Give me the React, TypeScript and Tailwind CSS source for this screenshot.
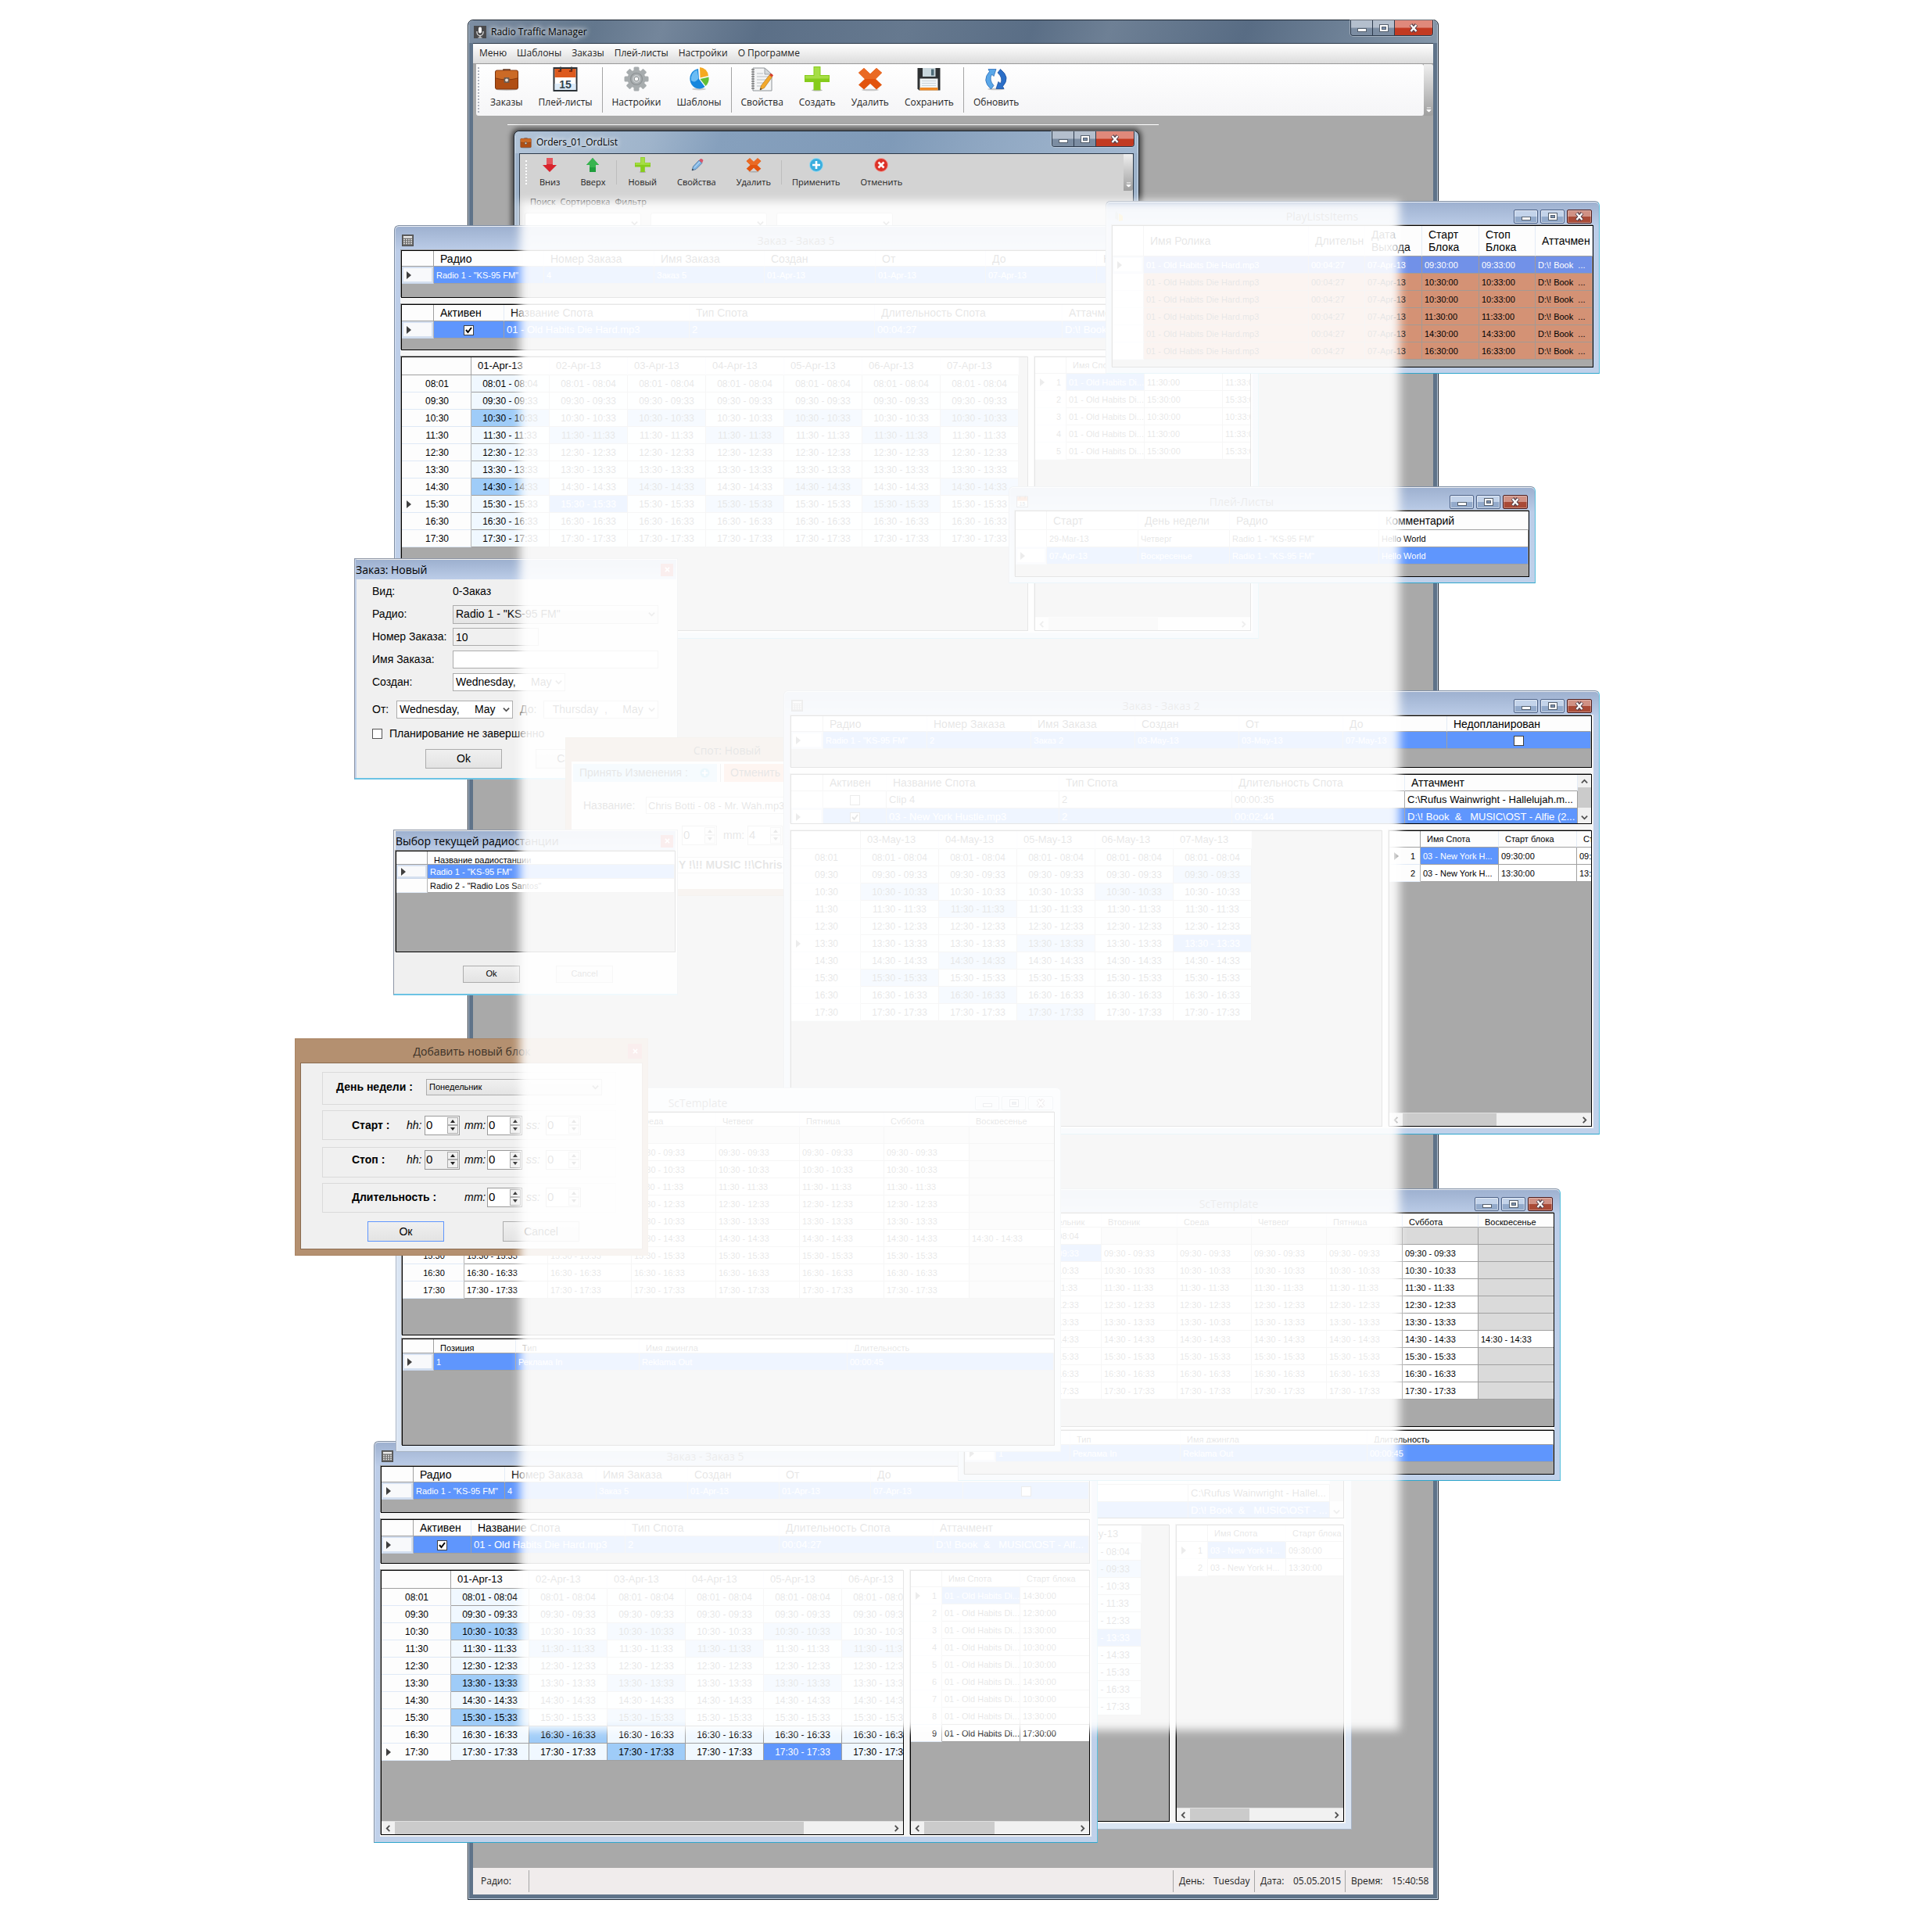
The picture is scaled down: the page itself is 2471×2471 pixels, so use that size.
import React from "react";

const ARIAL = "font-['Liberation_Sans',sans-serif]";
const SEGOE = "font-['Open_Sans','Noto_Sans',sans-serif]";
const SMALL = "text-[11px] leading-4 font-['Liberation_Sans',sans-serif]";

/* ---------- icons ---------- */

function Mic() {
  return (
    <svg viewBox="0 0 16 16" className="size-4">
      <rect width="16" height="16" fill="#4a4a4c" />
      <rect x="6" y="1.5" width="4" height="8" rx="2" fill="#fff" />
      <path d="M4 7v1.5a4 4 0 0 0 8 0V7M8 12.5V15M5.5 15h5" stroke="#e8e8e8" strokeWidth="1.2" fill="none" />
    </svg>
  );
}
function Briefcase({ className = "size-8" }: { className?: string }) {
  return (
    <svg viewBox="0 0 32 32" className={className}>
      <ellipse cx="16" cy="29.5" rx="14" ry="1.500" fill="#000" opacity=".2" />
      <path d="M12 6V4h8v2" fill="none" stroke="#5a2a10" strokeWidth="1.500" />
      <rect x="1.500" y="5" width="29" height="24" rx="2" fill="#b04e14" stroke="#7c330c" />
      <path d="M2 7.500q0-2 2-2h24q2 0 2 2V15q-14 4-28 0z" fill="#cb6a26" />
      <path d="M2 15q14 4 28 0" fill="none" stroke="#8a3c10" strokeWidth="1.300" />
      <rect x="12.500" y="14" width="7" height="7" rx="1" fill="#6b5a50" />
      <circle cx="16" cy="17.500" r="2" fill="#e8e0d8" />
    </svg>
  );
}
function Calendar({ className = "size-8" }: { className?: string }) {
  return (
    <svg viewBox="0 0 32 32" className={className}>
      <rect x="1.500" y="2" width="29" height="29" fill="#fff" stroke="#2c3238" strokeWidth="2" />
      <rect x="2.500" y="3" width="27" height="11" fill="#dd5a1e" />
      <rect x="2.500" y="22" width="27" height="8" fill="#dcebf8" />
      <path d="M10 .5v5M24 .5v5" stroke="#3a3a3a" strokeWidth="2.200" />
      <path d="M7 6h4M21 6h4" stroke="#8a2a08" strokeWidth="2" />
      <text x="16" y="27.500" textAnchor="middle" fontFamily="Liberation Sans, sans-serif" fontWeight="700" fontSize="14" fill="#33444f">15</text>
    </svg>
  );
}
function Gear() {
  return (
    <svg viewBox="0 0 32 32" className="size-8">
      <g fill="#a7acae">
        {[0, 45, 90, 135].map((a) => (
          <rect key={a} x="12.500" y="0.500" width="7" height="31" rx="1.500" transform={`rotate(${a} 16 16)`} />
        ))}
        <circle cx="16" cy="16" r="11.500" />
      </g>
      <circle cx="16" cy="16" r="7.500" fill="none" stroke="#8d9294" strokeWidth="1.200" />
      <circle cx="16" cy="16" r="5" fill="#c6cacc" />
      <circle cx="16" cy="16" r="2.800" fill="#fff" stroke="#8b9093" />
    </svg>
  );
}
function Pie() {
  return (
    <svg viewBox="0 0 32 32" className="size-8">
      <ellipse cx="16" cy="29" rx="9" ry="1.500" fill="#000" opacity=".18" />
      <path d="M15 3A12 12.800 0 1 0 23.500 26L16 16z" fill="#1787dd" />
      <path d="M13.500 4.500A11 11.500 0 0 0 6 18Q11 22 15.500 15z" fill="#6bbcf4" />
      <path d="M17 1A11.500 12 0 0 1 28 12L17.500 14.500z" fill="#f5a921" />
      <path d="M28.500 13.500A12.500 13 0 0 1 24.500 25L17.500 16z" fill="#63bf35" />
    </svg>
  );
}
function Notebook() {
  return (
    <svg viewBox="0 0 32 32" className="size-8">
      <path d="M4 2h15l9 8v21H4z" fill="#f4f5f6" stroke="#8f9498" strokeWidth="1" />
      <path d="M19 2v8h9z" fill="#d5d9dc" stroke="#8f9498" strokeWidth=".8" />
      <path d="M9 9h8M9 13h15M9 17h15M9 21h12M9 25h10" stroke="#b9bec2" strokeWidth="1" />
      <path d="M2 4h4M2 7h4M2 10h4M2 13h4M2 16h4M2 19h4M2 22h4M2 25h4M2 28h4" stroke="#555" strokeWidth="1.100" />
      <path d="M13 30l1.500-5.500L25 11l3.500 2.500L18.500 27.500z" fill="#f3a92c" stroke="#a86b12" strokeWidth=".6" />
      <path d="M25 11l1.500-2q2.500 0 3.500 2.500l-1.500 2z" fill="#d8402c" />
      <path d="M13 30l.8-2.500 1.700 1.400z" fill="#333" />
    </svg>
  );
}
function Plus({ className = "size-8" }: { className?: string }) {
  return (
    <svg viewBox="0 0 32 32" className={className}>
      <ellipse cx="16" cy="30.300" rx="7" ry="1.300" fill="#000" opacity=".25" />
      <path d="M11.500 0h9v11H32v9H20.500v10.500h-9V20H0v-9h11.500z" fill="#86cc1c" />
      <path d="M12.500 1h7v11H31v3.500H1V12h11.500z" fill="#a6de45" />
    </svg>
  );
}
function Cross({ className = "size-8" }: { className?: string }) {
  return (
    <svg viewBox="0 0 32 32" className={className}>
      <ellipse cx="16" cy="30" rx="11" ry="1.300" fill="#000" opacity=".2" />
      <path d="M8 2l8 7.500L24 2l7 6-8 8 8 7.500-7 6-8-7.500-8 7.500-7-6L9 16 1 8z" fill="#e2540e" />
      <path d="M8 2l8 7.500L24 2l7 6-8 8H9L1 8z" fill="#ea6a24" />
    </svg>
  );
}
function Floppy() {
  return (
    <svg viewBox="0 0 32 32" className="size-8">
      <path d="M1.500 2h29v28.500h-27l-2-2z" fill="#2e3133" />
      <rect x="8" y="2" width="16.500" height="11" fill="#c8d6dc" />
      <rect x="19" y="3.500" width="3.500" height="8" fill="#4e6a76" />
      <rect x="4.500" y="15.500" width="23" height="15" fill="#f1f5f7" />
      <path d="M7 18.500h18M7 21.500h18M7 24.500h18" stroke="#cbd5da" />
      <rect x="4.500" y="27" width="23" height="3.500" fill="#f08a24" />
    </svg>
  );
}
function Refresh() {
  return (
    <svg viewBox="0 0 32 32" className="size-8">
      <ellipse cx="16" cy="29" rx="11" ry="1.300" fill="#000" opacity=".2" />
      <path d="M6 3.500h10l-3 9-2.500-2.500Q6.500 17 13 24.500L9.500 29Q-3 18 7.500 6.500z" fill="#5aa7e8" stroke="#2a6cb8" strokeWidth=".8" />
      <path d="M26 28.500H16l3-9 2.500 2.500Q25.500 15 18 8l3.500-4.500Q35 14 24.500 25.500z" fill="#2b6fc8" stroke="#1c4f9c" strokeWidth=".8" />
    </svg>
  );
}
function ArrowDown() {
  return (
    <svg viewBox="0 0 20 20" className="size-5">
      <path d="M6 1h8v9h5l-9 9-9-9h5z" fill="#d8232c" />
      <path d="M6 1h8v8H6z" fill="#e5555c" />
    </svg>
  );
}
function ArrowUp() {
  return (
    <svg viewBox="0 0 20 20" className="size-5">
      <path d="M6 19h8v-9h4l-8-9-8 9h4z" fill="#1f9e3c" />
      <path d="M10 1l8 9h-4v3H6v-3H2z" fill="#38b44f" />
    </svg>
  );
}
function PencilIcon() {
  return (
    <svg viewBox="0 0 20 20" className="size-5">
      <path d="M4 17l1.500-5L13 4l4 3.500-8 8z" fill="#7fb6e6" stroke="#4d6f95" strokeWidth=".8" />
      <path d="M13 4l2-2q2-.5 3.500 2L17 7.500z" fill="#d9556a" />
      <path d="M4 17l.7-2.300 1.700 1.500z" fill="#333" />
      <path d="M7 13.500l7-7.500" stroke="#c9e2f7" />
    </svg>
  );
}
function RoundPlus({ className = "size-5" }: { className?: string }) {
  return (
    <svg viewBox="0 0 20 20" className={className}>
      <circle cx="10" cy="10" r="8.500" fill="#3aaede" stroke="#9ddaf0" />
      <path d="M8.700 5h2.600v3.700H15v2.600h-3.700V15H8.700v-3.700H5V8.700h3.700z" fill="#fff" />
    </svg>
  );
}
function RoundCross() {
  return (
    <svg viewBox="0 0 20 20" className="size-5">
      <circle cx="10" cy="10" r="8.500" fill="#dc3127" stroke="#efa39d" />
      <path d="M6.500 6.500l7 7M13.500 6.500l-7 7" stroke="#fff" strokeWidth="2.600" />
    </svg>
  );
}
function Calc() {
  return (
    <svg viewBox="0 0 15 15" className="size-[15px]">
      <rect x=".5" y=".5" width="14" height="14" fill="#6a6a6a" stroke="#4c4c4c" />
      <rect x="2" y="2" width="11" height="2.500" fill="#e9e9e9" />
      <path d="M2 6.500h11M2 9h11M2 11.500h11" stroke="#dcdcdc" strokeWidth="1.600" strokeDasharray="2 1" />
    </svg>
  );
}
function Feather() {
  return (
    <svg viewBox="0 0 15 15" className="size-[15px]">
      <path d="M3 1l3 3v9l-4-3z" fill="#8fa6a0" />
      <path d="M7 4l5 3v6l-5 1z" fill="#e8b423" />
    </svg>
  );
}
function Chevron({ dir, className = "size-[9px]" }: { dir: "l" | "r" | "u" | "d"; className?: string }) {
  const d = { l: "M7 1L3 5l4 4", r: "M3 1l4 4-4 4", u: "M1 7l4-4 4 4", d: "M1 3l4 4 4-4" }[dir];
  return (
    <svg viewBox="0 0 10 10" className={className}>
      <path d={d} fill="none" stroke="#505050" strokeWidth="2" />
    </svg>
  );
}
function Pointer() {
  return (
    <svg viewBox="0 0 6 10" className="h-[10px] w-[6px]">
      <path d="M0 0l6 5-6 5z" fill="#404040" />
    </svg>
  );
}

/* ---------- window chrome ---------- */

function MinGlyph() {
  return (
    <svg viewBox="0 0 14 12" className="h-3 w-[14px]">
      <rect x="1.500" y="6.500" width="11" height="4" fill="#fff" stroke="#55606e" />
    </svg>
  );
}
function MaxGlyph() {
  return (
    <svg viewBox="0 0 14 12" className="h-3 w-[14px]">
      <rect x="1.500" y="1.500" width="11" height="9" fill="#fff" stroke="#55606e" />
      <rect x="4.500" y="4.500" width="5" height="3" fill="#7d92b0" stroke="#55606e" />
    </svg>
  );
}
function CloseGlyph() {
  return (
    <svg viewBox="0 0 14 12" className="h-3 w-[14px]">
      <path d="M3.500 1.500l7 9M10.500 1.500l-7 9" stroke="#55404a" strokeWidth="4.500" />
      <path d="M3.500 2l7 8M10.500 2l-7 8" stroke="#fff" strokeWidth="2.400" />
    </svg>
  );
}

function CaptionButtons({ pale }: { pale?: boolean }) {
  const plain = pale
    ? "border-[#8f9fb8] bg-[#d9e5f3]"
    : "border-[#4d6287] bg-linear-to-b from-[#c3d3ea] from-50% to-[#93aacb] to-50%";
  const close = pale
    ? "border-[#8f9fb8] bg-[#d9e5f3]"
    : "border-[#4e1c1c] bg-linear-to-b from-[#d09184] from-50% to-[#a94a36] to-50%";
  return (
    <div className="flex gap-[3px]">
      <button aria-label="Свернуть" className={`flex h-[18px] w-[31px] items-center justify-center rounded-[2px] border shadow-[inset_0_0_0_1px_#ffffff88] ${plain}`}><MinGlyph /></button>
      <button aria-label="Развернуть" className={`flex h-[18px] w-[31px] items-center justify-center rounded-[2px] border shadow-[inset_0_0_0_1px_#ffffff88] ${plain}`}><MaxGlyph /></button>
      <button aria-label="Закрыть" className={`flex h-[18px] w-[32px] items-center justify-center rounded-[2px] border shadow-[inset_0_0_0_1px_#ffffff55] ${close}`}><CloseGlyph /></button>
    </div>
  );
}

function AeroButtons() {
  return (
    <div className="flex h-5 self-start overflow-hidden rounded-b-[4px] border border-t-0 border-[#2c3a4c] shadow-[0_0_0_1px_#ffffff55]">
      <button aria-label="Свернуть" className="flex w-7 items-center justify-center border-r border-[#2c3a4c] bg-linear-to-b from-[#b4bfcd] from-45% to-[#7c8da2] to-55%"><MinGlyph /></button>
      <button aria-label="Развернуть" className="flex w-7 items-center justify-center border-r border-[#2c3a4c] bg-linear-to-b from-[#b4bfcd] from-45% to-[#7c8da2] to-55%"><MaxGlyph /></button>
      <button aria-label="Закрыть" className="flex w-12 items-center justify-center bg-linear-to-b from-[#e0897b] from-45% to-[#c23a22] to-55%"><CloseGlyph /></button>
    </div>
  );
}

function Win({ className, title, icon, pale, children }: { className: string; title: string; icon?: React.ReactNode; pale?: boolean; children: React.ReactNode }) {
  const skin = pale
    ? "border-[#a7b3c4] bg-[#dae5f3]"
    : "border-[#7f8ea3] border-b-[#2fa6cc] border-r-[#58bfdc] bg-[linear-gradient(to_bottom,#9db0cf_0,#bccde8_32px,#c0d1ea_100%)]";
  return (
    <section className={`absolute flex flex-col rounded-t-[6px] border px-[7px] pb-[7px] shadow-[inset_0_1px_0_#ffffffcc,inset_1px_0_0_#ffffff66] ${skin} ${className}`}>
      <header className="flex h-[30px] shrink-0 items-center pt-[7px] pr-[2px]">
        <span className="flex w-6 justify-start pl-[2px]">{icon}</span>
        <h2 className={`flex-1 text-center text-[14px] leading-5 text-[#3c3c3c] ${SEGOE}`}>{title}</h2>
        <CaptionButtons pale={pale} />
      </header>
      {children}
    </section>
  );
}

function Body({ children, className = "gap-2 pt-px pr-[2px] pb-[2px] pl-px" }: { children: React.ReactNode; className?: string }) {
  return <div className={`flex min-h-0 flex-1 flex-col bg-[#f6f6f6] ${className}`}>{children}</div>;
}

function Panel({ className = "", children }: { className?: string; children?: React.ReactNode }) {
  return (
    <div className={`flex min-w-0 flex-col overflow-hidden border border-black bg-[#a9a9a9] shadow-[-1px_-1px_0_#9a9a9a] ${className}`}>
      {children}
    </div>
  );
}

/* ---------- grid ---------- */

type Tone = "hit" | "sel" | "off" | "brown" | "brownsel" | "plain" | "alice";
const TONES: Record<Tone, string> = {
  hit: "bg-[#9fccf8] text-black",
  sel: "bg-[#5f96fd] text-white",
  off: "bg-[#dadada] text-black",
  brown: "bg-[#d49275] text-black",
  brownsel: "bg-[#7191e8] text-white",
  plain: "bg-white text-black",
  alice: "bg-[#f0f8ff] text-black",
};

function Check({ on, label }: { on?: boolean; label: string }) {
  return (
    <span className="relative inline-flex size-[13px] align-middle">
      <input type="checkbox" aria-label={label} defaultChecked={on} className="peer size-[13px] appearance-none border border-[#404040] bg-white" />
      <svg viewBox="0 0 13 13" className="pointer-events-none absolute inset-0 hidden size-[13px] peer-checked:block">
        <path d="M3 6l2.500 3L10 3" fill="none" stroke="#000" strokeWidth="2" />
      </svg>
    </span>
  );
}

interface GridProps {
  cols: string[];
  head: string[];
  rows: React.ReactNode[][];
  tone?: (r: number, c: number) => Tone;
  marker?: number;
  rowHeads?: string[];
  rowHeadClass?: string;
  headRow: string;
  headClass?: string;
  cellRow?: string;
  cellClass?: string;
  line?: string;
  fit?: boolean;
  clip?: boolean;
  centered?: number[];
  label: string;
}

function Grid({ cols, head, rows, tone = () => "plain", marker = -1, rowHeads, rowHeadClass = "", headRow, headClass = "", cellRow = "h-[22px]", cellClass = "", line = "border-[#a0a0a0]", fit, clip, centered = [], label }: GridProps) {
  return (
    <table aria-label={label} className={`table-fixed border-separate border-spacing-0 ${fit ? "w-px" : "w-full"}`}>
      <colgroup>
        {cols.map((w, i) => <col key={i} className={w} />)}
      </colgroup>
      <thead>
        <tr className={headRow}>
          <td className="border-r border-b border-[#a0a0a0] bg-[#fdfdfd] p-0" />
          {head.map((h, i) => (
            <th key={i} scope="col" className={`overflow-hidden border-r border-b border-r-[#e4ecf7] border-b-[#a0a0a0] bg-[#fdfdfd] p-0 pl-2 text-left align-middle font-normal whitespace-pre text-black ${headClass}`}>
              {clip ? <span className="block h-[13px] overflow-hidden leading-[18px]">{h}</span> : h}
            </th>
          ))}
        </tr>
      </thead>
      <tbody>
        {rows.map((row, r) => (
          <tr key={r} className={cellRow}>
            <th scope="row" className={`border-r border-b border-r-[#b5b5b5] p-0 font-normal text-black ${r === marker && !rowHeads ? "border-b-[#c9d6ea] bg-[#f8f9fb] shadow-[inset_0_0_0_2px_#d5e0f0]" : "border-b-[#dfe9f6] bg-[#fdfdfd]"} ${cellClass}`}>
              <div className="flex items-center pl-[6px]">
                <span className="w-3">{r === marker && <Pointer />}</span>
                <span className={`flex-1 ${rowHeadClass}`}>{rowHeads?.[r]}</span>
              </div>
            </th>
            {row.map((cell, c) => (
              <td key={c} className={`overflow-hidden border-r border-b p-0 align-middle whitespace-pre ${line} ${centered.includes(c) ? "text-center" : "pl-[3px]"} ${TONES[tone(r, c)]} ${cellClass}`}>
                {cell}
              </td>
            ))}
          </tr>
        ))}
      </tbody>
    </table>
  );
}

const TIMES = ["08:01", "09:30", "10:30", "11:30", "12:30", "13:30", "14:30", "15:30", "16:30", "17:30"];
const block = (t: string) => (t === "08:01" ? "08:01 - 08:04" : `${t} - ${t.slice(0, 2)}:33`);

function DayGrid({ days, hits, sel, marker, label }: { days: string[]; hits: string[]; sel: string; marker: number; label: string }) {
  return (
    <Grid
      label={label}
      fit
      cols={["w-[89px]", ...days.map(() => "w-[100px]")]}
      head={days}
      headRow="h-[23px]"
      headClass={`text-[13px] leading-5 ${ARIAL}`}
      rows={TIMES.map((t) => days.map(() => block(t)))}
      rowHeads={TIMES}
      rowHeadClass="pr-4 text-center"
      cellClass={`text-[12px] leading-5 ${ARIAL}`}
      centered={days.map((_, i) => i)}
      marker={marker}
      tone={(r, c) => (sel === `${r}${c}` ? "sel" : hits.includes(`${r}${c}`) ? "hit" : "alice")}
    />
  );
}

function SpotGrid({ rows, label, wide = true }: { rows: string[][]; label: string; wide?: boolean }) {
  return (
    <Grid
      label={label}
      fit
      cols={wide ? ["w-[40px]", "w-[100px]", "w-[100px]", "w-[100px]"] : ["w-[40px]", "w-[100px]", "w-[100px]"]}
      head={wide ? ["Имя Спота", "Старт блока", "Стоп блока"] : ["Имя Спота", "Старт блока"]}
      headRow="h-[21px]"
      headClass={SMALL}
      rows={wide ? rows : rows.map((r) => r.slice(0, 2))}
      rowHeads={rows.map((_, i) => String(i + 1))}
      rowHeadClass="pr-[6px] text-right"
      cellClass={SMALL}
      marker={0}
      tone={(r, c) => (r === 0 && c === 0 ? "sel" : "plain")}
    />
  );
}

function HBar({ thumb }: { thumb: string }) {
  return (
    <div className="mt-auto flex h-[17px] shrink-0 border-t border-[#e0e0e0] bg-[#f1f1f1]">
      <button aria-label="Влево" className="flex w-[17px] items-center justify-center"><Chevron dir="l" /></button>
      <div className="flex flex-1"><div className={`bg-[#cbcbcb] ${thumb}`} /></div>
      <button aria-label="Вправо" className="flex w-[17px] items-center justify-center"><Chevron dir="r" /></button>
    </div>
  );
}
function VBar() {
  return (
    <div className="flex w-[17px] shrink-0 flex-col items-stretch bg-[#f1f1f1]">
      <button aria-label="Вверх" className="flex h-[16px] shrink-0 items-center justify-center"><Chevron dir="u" /></button>
      <div className="flex-1"><div className="h-[26px] bg-[#cbcbcb]" /></div>
      <button aria-label="Вниз" className="flex h-[16px] shrink-0 items-center justify-center"><Chevron dir="d" /></button>
    </div>
  );
}

const HEAD14 = `text-[14px] leading-[18px] ${ARIAL}`;
const ORDER_HEAD = ["Радио", "Номер Заказа", "Имя Заказа", "Создан", "От", "До", "Недопланирован"];
const SPOT_HEAD = ["Активен", "Название Спота", "Тип Спота", "Длительность Спота", "Аттачмент"];

function OrderGrid({ cols, values }: { cols: string[]; values: string[] }) {
  return (
    <Grid
      label="Заказ"
      cols={cols}
      head={ORDER_HEAD}
      headRow="h-[20px]"
      headClass={HEAD14}
      rows={[[...values, <Check label="Недопланирован" />]]}
      centered={[6]}
      cellClass={SMALL}
      marker={0}
      tone={() => "sel"}
    />
  );
}
function ClipGrid({ cols, rows, marker }: { cols: string[]; rows: React.ReactNode[][]; marker: number }) {
  return (
    <Grid
      label="Споты"
      cols={cols}
      head={SPOT_HEAD}
      headRow="h-[21px]"
      headClass={HEAD14}
      rows={rows}
      centered={[0]}
      cellClass={`text-[13px] leading-4 ${ARIAL}`}
      marker={marker}
      tone={(r) => (r === marker ? "sel" : "plain")}
    />
  );
}

const APR = ["01-Apr-13", "02-Apr-13", "03-Apr-13", "04-Apr-13", "05-Apr-13", "06-Apr-13", "07-Apr-13"];
const MAY = ["03-May-13", "04-May-13", "05-May-13", "06-May-13", "07-May-13"];
const MAY_HITS = ["14", "20", "23", "31", "52", "61", "70", "81", "92"];
const MAY_SPOTS = [
  ["03 - New York H...", "09:30:00", "09:33:00"],
  ["03 - New York H...", "13:30:00", "13:33:00"],
];
const HABITS = "01 - Old Habits Di...";

/* ---------- ScTemplate ---------- */

const WEEK = ["Понедельник", "Вторник", "Среда", "Четверг", "Пятница", "Суббота", "Воскресенье"];

function WeekGrid({ cols, sel }: { cols: string[]; sel: string }) {
  const text = (r: number, c: number) => {
    if (r === 0) return c === 0 ? "08:01 - 08:04" : "";
    if (c === 6) return r === 6 ? "14:30 - 14:33" : "";
    if (r === 5 && c === 2) return "13:30 - 10:33";
    return block(TIMES[r]);
  };
  return (
    <Grid
      label="Шаблон недели"
      fit
      cols={cols}
      head={WEEK}
      headRow="h-[18px]"
      headClass={SMALL}
      clip
      rows={TIMES.map((_, r) => WEEK.map((__, c) => text(r, c)))}
      rowHeads={TIMES}
      rowHeadClass="pr-4 text-center"
      cellClass={SMALL}
      tone={(r, c) => (sel === `${r}${c}` ? "sel" : text(r, c) ? "plain" : "off")}
    />
  );
}
function JingleGrid({ cols }: { cols: string[] }) {
  return (
    <Grid
      label="Джинглы"
      cols={cols}
      head={["Позиция", "Тип", "Имя джингла", "Длительность"]}
      headRow="h-[18px]"
      headClass={SMALL}
      clip
      rows={[["1", "Реклама In", "Reklama Out", "00:00:45"]]}
      cellClass={SMALL}
      marker={0}
      tone={() => "sel"}
    />
  );
}

/* ---------- form controls ---------- */

function Combo({ value, className, label, bg = "bg-linear-to-b from-[#f0f0f0] to-[#e4e4e4]" }: { value: string; className: string; label: string; bg?: string }) {
  return (
    <span className={`relative inline-flex ${className}`}>
      <select aria-label={label} className={`w-full appearance-none border border-[#acacac] pl-[3px] whitespace-pre text-black ${bg}`}>
        <option>{value}</option>
      </select>
      <span className="pointer-events-none absolute inset-y-0 right-1 flex items-center"><Chevron dir="d" /></span>
    </span>
  );
}
function Spinner({ label, value = "0", disabled }: { label: string; value?: string; disabled?: boolean }) {
  return (
    <span className={`inline-flex h-[25px] w-[45px] border border-[#9a9a9a] p-px ${disabled ? "bg-[#f0f0f0]" : "bg-white"}`}>
      <input aria-label={label} defaultValue={value} readOnly={disabled} className={`min-w-0 flex-1 bg-transparent text-[15px] leading-5 ${ARIAL}`} />
      <span className="flex w-[14px] flex-col">
        <button aria-label="Больше" className="flex flex-1 items-center justify-center border border-[#acacac] bg-[#f0f0f0]"><svg viewBox="0 0 6 4" className="h-1 w-[6px]"><path d="M0 4l3-4 3 4z" fill="#222" /></svg></button>
        <button aria-label="Меньше" className="flex flex-1 items-center justify-center border border-[#acacac] bg-[#f0f0f0]"><svg viewBox="0 0 6 4" className="h-1 w-[6px]"><path d="M0 0l3 4 3-4z" fill="#222" /></svg></button>
      </span>
    </span>
  );
}
function PushButton({ children, className }: { children: React.ReactNode; className: string }) {
  return <button className={`border bg-linear-to-b from-[#f0f0f0] to-[#e3e3e3] text-black ${className}`}>{children}</button>;
}
function DialogClose({ className = "size-4" }: { className?: string }) {
  return (
    <button aria-label="Закрыть" className={`flex items-center justify-center bg-[#c75050] ${className}`}>
      <svg viewBox="0 0 8 8" className="size-[7px]"><path d="M1 1l6 6M7 1L1 7" stroke="#fff" strokeWidth="1.800" /></svg>
    </button>
  );
}

function NewOrderDialog() {
  const row = "flex h-[29px] items-center";
  const lab = "w-[103px] whitespace-nowrap";
  return (
    <section className={`absolute top-[714px] left-[453px] flex h-[283px] w-[414px] flex-col border border-[#8d95a5] border-b-2 border-b-[#6cc3e4] bg-[#f0f0f0] p-px text-[14px] text-black shadow-[inset_2px_0_0_#c3d2ea] ${ARIAL}`}>
      <header className="flex h-[25px] shrink-0 items-center justify-between bg-linear-to-b from-[#9db0cf] to-[#bccde8] pr-1">
        <h2 className={`text-[14px] ${SEGOE}`}>Заказ: Новый</h2>
        <DialogClose />
      </header>
      <form className="flex flex-col pt-px pl-[21px]" onSubmit={(e) => e.preventDefault()}>
        <div className={row}><span className={lab}>Вид:</span><span>0-Заказ</span></div>
        <div className={row}><span className={lab}>Радио:</span><Combo label="Радио" value={'Radio 1 - "KS-95 FM"'} className="h-6 w-[263px]" /></div>
        <label className={row}><span className={lab}>Номер Заказа:</span><input defaultValue="10" className="h-[23px] w-[110px] border border-[#acacac] bg-[#f0f0f0] px-[3px]" /></label>
        <label className={row}><span className={lab}>Имя Заказа:</span><input className="h-[23px] w-[263px] border border-[#acacac] bg-white px-[3px]" /></label>
        <div className={row}><span className={lab}>Создан:</span><Combo label="Создан" bg="bg-white" value={"Wednesday,\u00a0\u00a0\u00a0\u00a0\u00a0May"} className="h-[23px] w-[144px]" /></div>
        <div className="flex h-[41px] items-center">
          <span className="w-[31px]">От:</span>
          <Combo label="От" bg="bg-white" value={"Wednesday,\u00a0\u00a0\u00a0\u00a0\u00a0May"} className="h-[23px] w-[149px]" />
          <span className="w-[39px] pl-[9px]">До:</span>
          <Combo label="До" bg="bg-white" value={"\u00a0\u00a0Thursday\u00a0\u00a0,\u00a0\u00a0\u00a0\u00a0\u00a0May"} className="h-[23px] w-[147px]" />
        </div>
        <label className="flex h-[21px] items-center gap-[9px]">
          <input type="checkbox" className="size-[13px] appearance-none border border-[#555] bg-white" />
          Планирование не завершенно
        </label>
        <div className="mt-[9px] flex gap-[43px] pl-[68px]">
          <PushButton className="h-[25px] w-[98px] border-[#acacac] text-[14px]">Ok</PushButton>
          <PushButton className="h-[25px] w-[98px] border-[#acacac] text-[14px]">Cancel</PushButton>
        </div>
      </form>
    </section>
  );
}

function StationDialog() {
  return (
    <section className={`absolute top-[1061px] left-[503px] flex h-[212px] w-[364px] flex-col border border-[#8d95a5] border-b-2 border-b-[#6cc3e4] bg-[#f0f0f0] p-[2px] pt-px text-black ${ARIAL}`}>
      <header className="flex h-[25px] shrink-0 items-center justify-between bg-linear-to-b from-[#9db0cf] to-[#bccde8] pr-[3px]">
        <h2 className={`text-[14px] leading-6 ${SEGOE}`}>Выбор текущей радиостанции</h2>
        <DialogClose />
      </header>
      <Panel className="h-[130px] shrink-0">
        <Grid
          label="Радиостанции"
          cols={["w-[40px]", ""]}
          head={["Название радиостанции"]}
          headRow="h-[17px]"
          headClass={SMALL}
          clip
          cellRow="h-[18px]"
          rows={[['Radio 1 - "KS-95 FM"'], ['Radio 2 - "Radio Los Santos"']]}
          cellClass={SMALL}
          marker={0}
          tone={(r) => (r === 0 ? "sel" : "plain")}
        />
      </Panel>
      <div className="flex flex-1 items-center gap-[46px] pt-1 pr-1 pl-[86px]">
        <PushButton className="h-[22px] w-[73px] border-[#acacac] text-[11px]">Ok</PushButton>
        <PushButton className="h-[22px] w-[73px] border-[#acacac] text-[11px]">Cancel</PushButton>
      </div>
    </section>
  );
}

function SpotDialog() {
  return (
    <section className={`absolute top-[943px] left-[723px] flex h-[203px] w-[414px] flex-col border border-[#a5835f] bg-[#b49070] px-[7px] pb-2 text-[14px] text-black ${ARIAL}`}>
      <h2 className={`flex h-[30px] shrink-0 items-center justify-center text-[14px] ${SEGOE}`}>Спот: Новый</h2>
      <div className="flex flex-1 flex-col bg-[#f0f0f0] pt-[3px]">
        <div className="flex h-[23px] gap-[4px] px-[2px]">
          <button className="flex w-[184px] items-center justify-between bg-[#9fd3f5] pr-2 pl-2 whitespace-nowrap">Принять Изменения :<RoundPlus className="size-[15px]" /></button>
          <span className="w-px bg-[#808080]" />
          <button className="flex w-[140px] items-center bg-[#ef9872] pl-2">Отменить</button>
        </div>
        <label className="mt-[19px] flex h-[22px] items-center pl-[15px]">
          <span className="w-20">Название:</span>
          <input defaultValue="Chris Botti - 08 - Mr. Wah.mp3" className="h-[22px] w-[200px] border border-[#acacac] bg-white px-[2px] text-[13px]" />
        </label>
        <div className="mt-4 flex h-[22px] items-center pl-[15px]">
          <span className="w-[105px]">Длительность</span>
          <span className="w-[21px] text-[12px]">hh:</span>
          <Spinner label="Часы" />
          <span className="w-[39px] pl-2">mm:</span>
          <Spinner label="Минуты" value="4" />
        </div>
        <div className="mt-[17px] border-y border-[#acacac] bg-white pl-[98px] text-[14px] leading-[19px] font-bold whitespace-nowrap">D:\! MY !\!! MUSIC !!\Chris</div>
      </div>
    </section>
  );
}

function NewBlockDialog() {
  const group = "flex items-center border border-[#dadada] text-[14px]";
  const it = "text-[14px] italic";
  return (
    <section className={`absolute top-[1328px] left-[377px] flex h-[278px] w-[452px] flex-col border border-[#a98362] bg-[#b49070] px-[6px] pb-[7px] text-black ${ARIAL}`}>
      <header className="flex h-[30px] shrink-0 items-center pr-px pl-5">
        <h2 className={`flex-1 text-center text-[14px] text-[#3a3027] ${SEGOE}`}>Добавить новый блок</h2>
        <DialogClose className="h-[19px] w-[18px]" />
      </header>
      <form className="flex flex-1 flex-col border border-[#8a6b4f] bg-[#f0f0f0] pt-[11px] pr-[33px] pl-[27px]" onSubmit={(e) => e.preventDefault()}>
        <div className={`${group} h-[42px] pb-[3px] pl-[17px]`}>
          <span className="w-[115px] font-bold whitespace-nowrap">День недели :</span>
          <Combo label="День недели" value="Понедельник" className="h-[21px] w-[225px] text-[11px]" />
        </div>
        <div className={`${group} mt-[7px] h-[38px] pl-[37px]`}>
          <span className="w-[70px] font-bold">Старт :</span>
          <span className={`w-[23px] ${it}`}>hh:</span><Spinner label="Старт, часы" />
          <span className={`w-[35px] pl-[6px] ${it}`}>mm:</span><Spinner label="Старт, минуты" />
          <span className={`w-[30px] pl-[5px] ${it}`}>ss:</span><Spinner label="Старт, секунды" />
        </div>
        <div className={`${group} mt-[9px] h-[39px] pb-[7px] pl-[37px]`}>
          <span className="w-[70px] font-bold">Стоп :</span>
          <span className={`w-[23px] ${it}`}>hh:</span><Spinner label="Стоп, часы" disabled />
          <span className={`w-[35px] pl-[6px] ${it}`}>mm:</span><Spinner label="Стоп, минуты" />
          <span className={`w-[30px] pl-[5px] ${it}`}>ss:</span><Spinner label="Стоп, секунды" />
        </div>
        <div className={`${group} mt-[7px] h-[38px] pb-[2px] pl-[37px]`}>
          <span className="w-[138px] font-bold">Длительность :</span>
          <span className={`w-[35px] pl-[6px] ${it}`}>mm:</span><Spinner label="Длительность, минуты" />
          <span className={`w-[30px] pl-[5px] ${it}`}>ss:</span><Spinner label="Длительность, секунды" />
        </div>
        <div className="mt-[11px] flex gap-[75px] pl-[58px]">
          <PushButton className="h-[26px] w-[98px] border-[#5f96fd] text-[14px]">Ок</PushButton>
          <PushButton className="h-[26px] w-[98px] border-[#acacac] text-[14px]">Cancel</PushButton>
        </div>
      </form>
    </section>
  );
}

/* ---------- main window ---------- */

function Tool({ icon, children }: { icon: React.ReactNode; children: string }) {
  return (
    <button className="flex flex-col items-center px-[10px] pt-[3px] text-[12px] leading-4 text-[#1e1e1e]">
      {icon}
      <span className="mt-[6px]">{children}</span>
    </button>
  );
}
function SmallTool({ icon, children }: { icon: React.ReactNode; children: string }) {
  return (
    <button className="flex flex-col items-center px-[13px] pt-[4px] text-[11px] leading-4 text-[#1e1e1e]">
      {icon}
      <span className="mt-1">{children}</span>
    </button>
  );
}
const Sep = () => <span className="mx-[2px] my-1 w-px bg-[#a5a5a5]" />;

function Overflow() {
  return (
    <span className="flex w-3 items-end justify-center rounded-r-[3px] bg-linear-to-b from-[#efefef] to-[#9f9f9f] pb-1">
      <svg viewBox="0 0 8 8" className="size-[7px]"><path d="M1 1h6M1 4h6L4 7z" stroke="#fff" fill="#fff" /></svg>
    </span>
  );
}

function MainWindow() {
  return (
    <main className={`absolute top-[25px] right-[631px] bottom-[41px] left-[598px] flex flex-col rounded-t-[7px] border border-[#1d2733] bg-[#5f7389] px-[6px] pb-[6px] shadow-[inset_0_0_0_1px_#c5d3e2] ${SEGOE}`}>
      <header className="mx-[-5px] flex h-[29px] shrink-0 items-center rounded-t-[6px] bg-[linear-gradient(110deg,#7d8ea2_0,#63778d_13%,#74869b_20%,#5b6f87_30%,#66798f_45%,#5a6e86_58%,#6e8095_66%,#586c84_80%,#8496a9_100%)] pr-[5px] pl-[6px]">
        <Mic />
        <h1 className="ml-[6px] text-[12px] text-black [text-shadow:0_0_6px_#fff,0_0_8px_#fff]">Radio Traffic Manager</h1>
        <span className="flex-1" />
        <AeroButtons />
      </header>
      <nav className="flex h-[26px] shrink-0 items-center gap-[13px] border-t border-[#2d3a49] bg-linear-to-b from-white to-[#dcdcdc] pb-[2px] pl-[8px] text-[12px] text-[#1e1e1e]">
        {["Меню", "Шаблоны", "Заказы", "Плей-листы", "Настройки", "О Программе"].map((m) => (
          <button key={m}>{m}</button>
        ))}
      </nav>
      <div className="flex h-[67px] shrink-0 border-t border-[#9a9a9a] bg-[#a9a9a9] pl-1">
        <div className="flex flex-1 rounded-r-[3px] rounded-bl-[3px] bg-linear-to-b from-white to-[#f5f5f7]">
          <span className="my-1 ml-[2px] w-[6px] border-l-2 border-dotted border-[#b0b4be]" />
          <Tool icon={<Briefcase />}>Заказы</Tool>
          <Tool icon={<Calendar />}>Плей-листы</Tool>
          <Sep />
          <Tool icon={<Gear />}>Настройки</Tool>
          <Tool icon={<Pie />}>Шаблоны</Tool>
          <Sep />
          <Tool icon={<Notebook />}>Свойства</Tool>
          <Tool icon={<Plus />}>Создать</Tool>
          <Tool icon={<Cross />}>Удалить</Tool>
          <Tool icon={<Floppy />}>Сохранить</Tool>
          <Sep />
          <Tool icon={<Refresh />}>Обновить</Tool>
        </div>
        <Overflow />
      </div>
      <div className="flex-1 bg-[#a9a9a9] pt-[11px] pl-[44px]"><div className="h-px w-[833px] bg-white" /></div>
      <footer className="flex h-[34px] shrink-0 items-center bg-[#f0ecec] text-[12px] text-[#1e1e1e]">
        <span className="w-[71px] pl-[10px]">Радио:</span>
        <span className="h-7 w-px bg-[#a5a5a5]" />
        <span className="flex-1" />
        <span className="h-7 w-px bg-[#a5a5a5]" />
        <span className="w-[51px] pl-[7px]">День:</span><span className="w-[52px]">Tuesday</span>
        <span className="h-7 w-px bg-[#a5a5a5]" />
        <span className="w-[49px] pl-[7px]">Дата:</span><span className="w-[66px]">05.05.2015</span>
        <span className="h-7 w-px bg-[#a5a5a5]" />
        <span className="w-[59px] pl-[7px]">Время:</span><span className="w-[53px]">15:40:58</span>
      </footer>
    </main>
  );
}

function OrdList() {
  return (
    <section className={`absolute top-[167px] left-[657px] flex h-[240px] w-[800px] flex-col rounded-t-[7px] border border-[#17202b] bg-[#9db2ca] px-[6px] shadow-[0_0_6px_3px_#00000099,inset_0_0_0_1px_#d9e5f2] ${SEGOE}`}>
      <header className="mx-[-5px] flex h-[28px] shrink-0 items-center rounded-t-[6px] bg-[linear-gradient(110deg,#b2c4d8_0,#9fb4cb_22%,#86a0bd_33%,#7f9ab8_60%,#8fa7c2_75%,#a3b8d0_100%)] pr-[4px] pl-[6px]">
        <Briefcase className="size-[15px]" />
        <h2 className="ml-[6px] text-[12px] text-black [text-shadow:0_0_6px_#fff,0_0_8px_#fff]">Orders_01_OrdList</h2>
        <span className="flex-1" />
        <AeroButtons />
      </header>
      <div className="flex flex-1 flex-col border border-[#2d3a49] bg-[#d3d3d3]">
        <div className="flex h-[47px] shrink-0">
          <span className="my-2 ml-[7px] w-[5px] border-l-2 border-dotted border-white" />
          <SmallTool icon={<ArrowDown />}>Вниз</SmallTool>
          <SmallTool icon={<ArrowUp />}>Вверх</SmallTool>
          <span className="mx-px my-2 w-px bg-[#bdbdbd]" />
          <SmallTool icon={<Plus className="size-5" />}>Новый</SmallTool>
          <SmallTool icon={<PencilIcon />}>Свойства</SmallTool>
          <SmallTool icon={<Cross className="size-5" />}>Удалить</SmallTool>
          <span className="my-2 w-px bg-[#bdbdbd]" />
          <SmallTool icon={<RoundPlus />}>Применить</SmallTool>
          <SmallTool icon={<RoundCross />}>Отменить</SmallTool>
          <span className="flex-1" />
          <Overflow />
        </div>
        <div className="flex h-[28px] shrink-0 items-center gap-[6px] pl-[13px] text-[11px] text-[#1e1e1e]">
          <span>Поиск</span><span>Сортировка</span><span>Фильтр</span>
        </div>
        <div className="flex gap-3 pl-[6px]">
          {["Поиск", "Сортировка", "Фильтр"].map((n) => (
            <Combo key={n} label={n} value="" bg="bg-white rounded-[3px]" className="h-[26px] w-[149px] text-[12px]" />
          ))}
        </div>
      </div>
    </section>
  );
}

export default function App() {
  return (
    <div className="relative h-screen min-h-[2400px] w-full overflow-hidden bg-white">
      <MainWindow />
      <OrdList />

      <Win title="Заказ - Заказ 5" icon={<Calc />} className="top-[288px] left-[504px] h-[529px] w-[1106px]">
        <Body>
          <Panel className="h-[61px] shrink-0">
            <OrderGrid
              cols={["w-[41px]", "w-[141px]", "w-[141px]", "w-[141px]", "w-[142px]", "w-[141px]", "w-[142px]", ""]}
              values={['Radio 1 - "KS-95 FM"', "4", "Заказ 5", "01-Apr-13", "01-Apr-13", "07-Apr-13"]}
            />
          </Panel>
          <Panel className="h-[59px] shrink-0">
            <ClipGrid
              cols={["w-[41px]", "w-[90px]", "w-[237px]", "w-[237px]", "w-[240px]", ""]}
              rows={[[<Check on label="Активен" />, "01 - Old Habits Die Hard.mp3", "2", "00:04:27", "D:\\! Book  &   MUSIC\\OST - Alfie (2..."]]}
              marker={0}
            />
          </Panel>
          <div className="flex min-h-0 flex-1 gap-2">
            <Panel className="flex-1">
              <DayGrid label="Сетка вещания" days={APR} hits={["20", "22", "24", "26", "31", "33", "35", "60", "62", "64", "66", "73", "75"]} sel="71" marker={7} />
            </Panel>
            <Panel className="w-[277px] shrink-0">
              <SpotGrid
                label="Выходы спотов"
                rows={[[HABITS, "11:30:00", "11:33:00"], [HABITS, "15:30:00", "15:33:00"], [HABITS, "10:30:00", "10:33:00"], [HABITS, "11:30:00", "11:33:00"], [HABITS, "15:30:00", "15:33:00"]]}
              />
              <HBar thumb="w-[140px]" />
            </Panel>
          </div>
        </Body>
      </Win>

      <Win title="PlayListsItems" icon={<Feather />} className="top-[257px] left-[1414px] h-[221px] w-[632px]">
        <Panel className="flex-1">
          <Grid
            label="Элементы плей-листа"
            cols={["w-[40px]", "w-[211px]", "w-[72px]", "w-[73px]", "w-[73px]", "w-[72px]", ""]}
            head={["Имя Ролика", "Длительн", "Дата\nВыхода", "Старт\nБлока", "Стоп\nБлока", "Аттачмен"]}
            headRow="h-[39px]"
            headClass={`text-[14px] leading-4 ${ARIAL}`}
            rows={["09", "10", "10", "11", "14", "16"].map((h) => ["01 - Old Habits Die Hard.mp3", "00:04:27", "07-Apr-13", `${h}:30:00`, `${h}:33:00`, "D:\\! Book  ..."])}
            cellClass={SMALL}
            line="border-[#a39a94]"
            marker={0}
            tone={(r) => (r === 0 ? "brownsel" : "brown")}
          />
        </Panel>
      </Win>

      <Win title="Плей-Листы" icon={<Calendar className="size-[15px]" />} className="top-[622px] left-[1290px] h-[124px] w-[674px]">
        <Panel className="flex-1">
          <Grid
            label="Плей-листы"
            cols={["w-[40px]", "w-[117px]", "w-[117px]", "w-[191px]", ""]}
            head={["Старт", "День недели", "Радио", "Комментарий"]}
            headRow="h-[24px]"
            headClass={HEAD14}
            rows={[["29-Mar-13", "Четверг", 'Radio 1 - "KS-95 FM"', "Hello World"], ["07-Apr-13", "Воскресенье", 'Radio 1 - "KS-95 FM"', "Hello World"]]}
            cellClass={SMALL}
            marker={1}
            tone={(r) => (r === 1 ? "sel" : "plain")}
          />
        </Panel>
      </Win>

      <NewOrderDialog />
      <SpotDialog />
      <StationDialog />

      <Win title="Заказ - Заказ 2" icon={<Calc />} className="top-[883px] left-[1002px] h-[568px] w-[1044px]">
        <Body>
          <Panel className="h-[67px] shrink-0">
            <OrderGrid
              cols={["w-[41px]", "w-[133px]", "w-[133px]", "w-[133px]", "w-[133px]", "w-[133px]", "w-[133px]", ""]}
              values={['Radio 1 - "KS-95 FM"', "2", "Заказ 2", "03-May-13", "03-May-13", "07-May-13"]}
            />
          </Panel>
          <Panel className="h-[64px] shrink-0">
            <div className="flex min-h-0 flex-1">
              <div className="min-w-0 flex-1 overflow-hidden">
                <ClipGrid
                  cols={["w-[41px]", "w-[81px]", "w-[221px]", "w-[221px]", "w-[221px]", ""]}
                  rows={[
                    [<Check label="Активен, Clip 4" />, "Clip 4", "2", "00:00:35", "C:\\Rufus Wainwright - Hallelujah.m..."],
                    [<Check on label="Активен, New York Hustle" />, "03 - New York Hustle.mp3", "2", "00:02:44", "D:\\! Book  &   MUSIC\\OST - Alfie (2..."],
                  ]}
                  marker={1}
                />
              </div>
              <VBar />
            </div>
          </Panel>
          <div className="flex min-h-0 flex-1 gap-2">
            <Panel className="flex-1">
              <DayGrid label="Сетка вещания" days={MAY} hits={MAY_HITS} sel="54" marker={5} />
            </Panel>
            <Panel className="w-[260px] shrink-0">
              <SpotGrid label="Выходы спотов" rows={MAY_SPOTS} />
              <HBar thumb="w-[120px]" />
            </Panel>
          </div>
        </Body>
      </Win>

      <Win pale title="Заказ - Заказ 2" icon={<Calc />} className="top-[1771px] left-[861px] h-[569px] w-[868px]">
        <Body>
          <Panel className="h-[66px] shrink-0">
            <OrderGrid
              cols={["w-[41px]", "w-[110px]", "w-[110px]", "w-[110px]", "w-[110px]", "w-[110px]", "w-[110px]", ""]}
              values={['Radio 1 - "KS-95 FM"', "2", "Заказ 2", "03-May-13", "03-May-13", "07-May-13"]}
            />
          </Panel>
          <Panel className="h-[65px] shrink-0">
            <div className="flex min-h-0 flex-1">
              <div className="min-w-0 flex-1 overflow-hidden">
                <ClipGrid
                  cols={["w-[41px]", "w-[69px]", "w-[179px]", "w-[180px]", "w-[180px]", ""]}
                  rows={[
                    [<Check label="Активен, Clip 4" />, "Clip 4", "2", "00:00:35", "C:\\Rufus Wainwright - Hallel..."],
                    [<Check on label="Активен, New York Hustle" />, "03 - New York Hustle.mp3", "2", "00:02:44", "D:\\! Book  &   MUSIC\\OST - ..."],
                  ]}
                  marker={1}
                />
              </div>
              <VBar />
            </div>
          </Panel>
          <div className="flex min-h-0 flex-1 gap-2">
            <Panel className="flex-1">
              <DayGrid label="Сетка вещания" days={MAY} hits={MAY_HITS} sel="54" marker={5} />
            </Panel>
            <Panel className="w-[215px] shrink-0">
              <SpotGrid label="Выходы спотов" rows={MAY_SPOTS} />
              <HBar thumb="w-[76px]" />
            </Panel>
          </div>
        </Body>
      </Win>

      <Win title="Заказ - Заказ 5" icon={<Calc />} className="top-[1843px] left-[478px] h-[514px] w-[926px]">
        <Body>
          <Panel className="h-[60px] shrink-0">
            <OrderGrid
              cols={["w-[41px]", "w-[117px]", "w-[117px]", "w-[117px]", "w-[117px]", "w-[117px]", "w-[118px]", ""]}
              values={['Radio 1 - "KS-95 FM"', "4", "Заказ 5", "01-Apr-13", "01-Apr-13", "07-Apr-13"]}
            />
          </Panel>
          <Panel className="h-[57px] shrink-0">
            <ClipGrid
              cols={["w-[41px]", "w-[74px]", "w-[197px]", "w-[197px]", "w-[197px]", ""]}
              rows={[[<Check on label="Активен" />, "01 - Old Habits Die Hard.mp3", "2", "00:04:27", "D:\\! Book  &   MUSIC\\OST - Alf..."]]}
              marker={0}
            />
          </Panel>
          <div className="flex min-h-0 flex-1 gap-2">
            <Panel className="flex-1">
              <DayGrid label="Сетка вещания" days={APR} hits={["20", "22", "24", "31", "33", "35", "50", "52", "54", "70", "72", "81", "92"]} sel="94" marker={9} />
              <HBar thumb="w-[523px]" />
            </Panel>
            <Panel className="w-[230px] shrink-0">
              <SpotGrid
                label="Выходы спотов"
                wide={false}
                rows={["14", "12", "13", "10", "10", "14", "10", "13", "17"].map((h) => [HABITS, `${h}:30:00`])}
              />
              <HBar thumb="w-[90px]" />
            </Panel>
          </div>
        </Body>
      </Win>

      <Win title="ScTemplate" className="top-[1520px] left-[1225px] h-[374px] w-[771px]">
        <Body className="gap-[4px]">
          <Panel className="h-[274px] shrink-0">
            <WeekGrid sel="10" cols={["w-[78px]", "w-[97px]", "w-[97px]", "w-[95px]", "w-[96px]", "w-[97px]", "w-[97px]", "w-[97px]"]} />
          </Panel>
          <Panel className="flex-1">
            <JingleGrid cols={["w-[40px]", "w-[95px]", "w-[141px]", "w-[239px]", ""]} />
          </Panel>
        </Body>
      </Win>

      <Win pale title="ScTemplate" className="top-[1391px] left-[506px] h-[466px] w-[851px]">
        <Body className="gap-[4px]">
          <Panel className="h-[286px] shrink-0">
            <WeekGrid sel="" cols={["w-[79px]", "w-[107px]", "w-[107px]", "w-[108px]", "w-[107px]", "w-[108px]", "w-[109px]", "w-[109px]"]} />
          </Panel>
          <Panel className="flex-1">
            <JingleGrid cols={["w-[40px]", "w-[105px]", "w-[158px]", "w-[266px]", ""]} />
          </Panel>
        </Body>
      </Win>

      <NewBlockDialog />

      <div className="pointer-events-none absolute top-[257px] left-[665px] h-[1956px] w-[1125px] bg-white/90 blur-[6px]" />
    </div>
  );
}
